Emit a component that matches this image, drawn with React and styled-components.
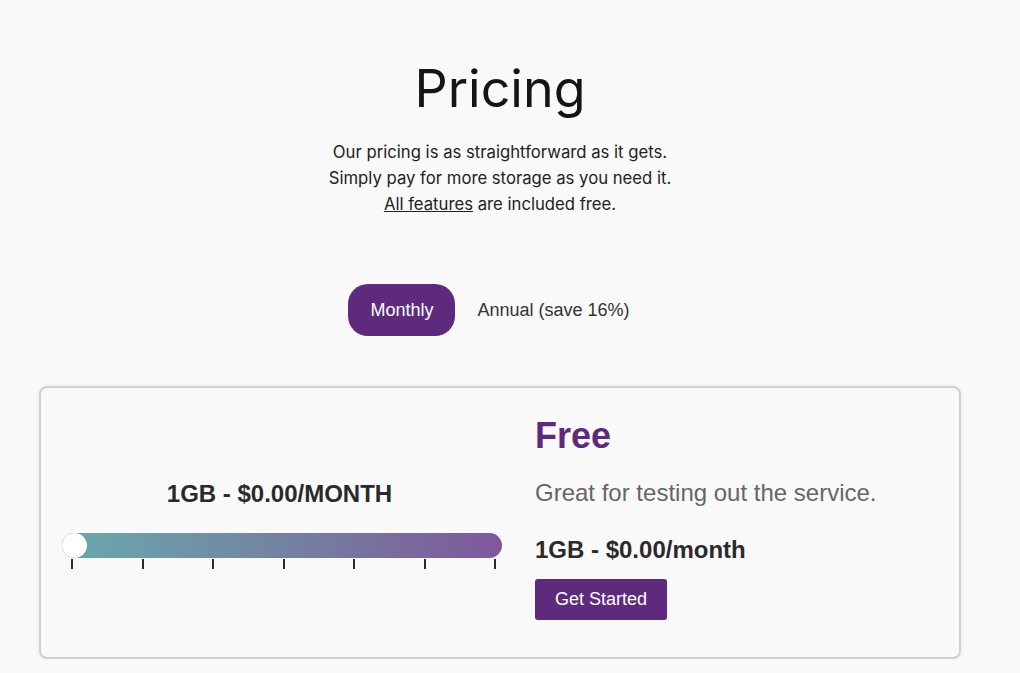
import styled, { createGlobalStyle } from "styled-components";

const GlobalStyle = createGlobalStyle`
  html, body {
    margin: 0;
    padding: 0;
    background: #f9f9f9;
  }
  body {
    font-family: "Liberation Sans", Arial, sans-serif;
    color: #222;
  }
`;

const Page = styled.div`
  width: 1000px;
  padding-top: 58px;
  display: flex;
  flex-direction: column;
  align-items: center;
`;

const Title = styled.h1`
  margin: 0;
  font-family: Inter, "Noto Sans", sans-serif;
  font-weight: 400;
  font-size: 52px;
  line-height: 1.2;
  color: #151515;
`;

const Intro = styled.p`
  margin: 20px 0 0;
  font-family: Inter, "Noto Sans", sans-serif;
  font-size: 16.7px;
  line-height: 25.6px;
  text-align: center;
  color: #222;

  a {
    color: #222;
    text-decoration: underline;
  }
`;

const Toggle = styled.div`
  display: flex;
  margin-top: 67px;
`;

const ToggleButton = styled.button`
  height: 52px;
  padding: 0 22px;
  border: none;
  border-radius: 20px;
  font-family: "Liberation Sans", Arial, sans-serif;
  font-size: 18px;
  cursor: pointer;
  background: ${(p) => (p.$active ? "#5e2a7e" : "transparent")};
  color: ${(p) => (p.$active ? "#fff" : "#333")};
`;

const Card = styled.div`
  box-sizing: border-box;
  width: 922px;
  margin-top: 50px;
  padding: 28px 22px 24px 21px;
  border: 2px solid #d0d0d0;
  border-radius: 8px;
  box-shadow: 0 0 4px rgba(0, 0, 0, 0.08);
  display: grid;
  grid-template-columns: 440px 1fr;
  column-gap: 33px;
  align-items: center;
`;

const SliderColumn = styled.div`
  display: flex;
  flex-direction: column;
  align-items: stretch;
`;

const SliderLabel = styled.div`
  font-size: 24px;
  line-height: 28px;
  font-weight: 700;
  text-align: center;
  color: #2a2a2a;
  margin-left: -5px;
`;

const Track = styled.div`
  position: relative;
  height: 25px;
  margin-top: 25px;
  border-radius: 13px;
  background: linear-gradient(to right, #6aa9af 0%, #7383a1 50%, #7f579d 100%);
`;

const Thumb = styled.div`
  position: absolute;
  left: 0;
  top: 0;
  width: 25px;
  height: 25px;
  border-radius: 50%;
  background: #fff;
  box-shadow: 0 0 1px rgba(0, 0, 0, 0.2);
`;

const Ticks = styled.div`
  display: flex;
  justify-content: space-between;
  padding: 0 6px 0 9px;
  margin-top: 1px;
`;

const Tick = styled.span`
  width: 2px;
  height: 10px;
  background: #2b2b2b;
`;

const PlanColumn = styled.div`
  display: flex;
  flex-direction: column;
  align-items: flex-start;
`;

const PlanName = styled.h2`
  margin: 0;
  font-size: 36px;
  line-height: 40px;
  font-weight: 700;
  color: #5e2a7e;
`;

const PlanText = styled.p`
  margin: 23px 0 0;
  font-size: 24px;
  line-height: 28px;
  color: #666;
`;

const PlanPrice = styled.div`
  margin-top: 29px;
  font-size: 24px;
  line-height: 28px;
  font-weight: 700;
  color: #2a2a2a;
`;

const StartButton = styled.button`
  margin: 15px 0 13px;
  height: 41px;
  padding: 0 20px;
  border: none;
  border-radius: 3px;
  background: #5e2a7e;
  color: #fff;
  font-family: "Liberation Sans", Arial, sans-serif;
  font-size: 18px;
  cursor: pointer;
`;

const ticks = [0, 1, 2, 3, 4, 5, 6];

export default function App() {
  return (
    <>
      <GlobalStyle />
      <Page>
        <Title>Pricing</Title>
        <Intro>
          Our pricing is as straightforward as it gets.
          <br />
          Simply pay for more storage as you need it.
          <br />
          <a href="#features">All features</a> are included free.
        </Intro>
        <Toggle>
          <ToggleButton $active>Monthly</ToggleButton>
          <ToggleButton>Annual (save 16%)</ToggleButton>
        </Toggle>
        <Card>
          <SliderColumn>
            <SliderLabel>1GB - $0.00/MONTH</SliderLabel>
            <Track>
              <Thumb />
            </Track>
            <Ticks>
              {ticks.map((t) => (
                <Tick key={t} />
              ))}
            </Ticks>
          </SliderColumn>
          <PlanColumn>
            <PlanName>Free</PlanName>
            <PlanText>Great for testing out the service.</PlanText>
            <PlanPrice>1GB - $0.00/month</PlanPrice>
            <StartButton>Get Started</StartButton>
          </PlanColumn>
        </Card>
      </Page>
    </>
  );
}
